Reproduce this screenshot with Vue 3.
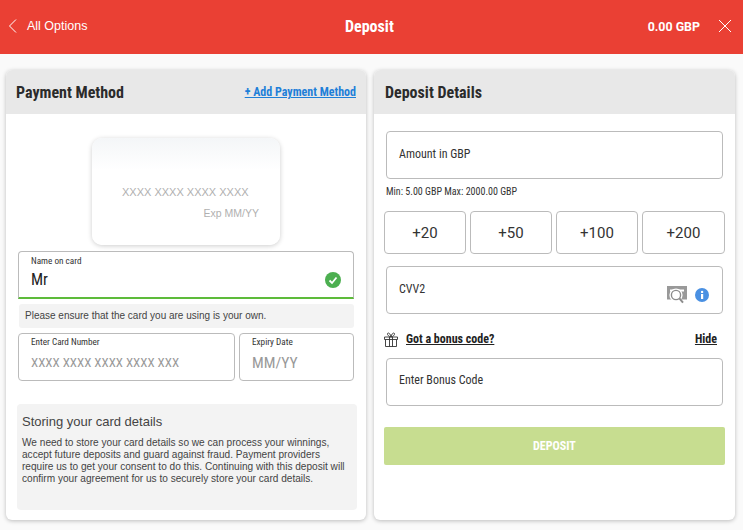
<template>
  <div class="page">
    <header class="topbar">
      <div class="back">
        <svg width="10" height="16" viewBox="0 0 10 16"><path d="M8 1.5 L1.5 8 L8 14.5" fill="none" stroke="#fff" stroke-width="1" /></svg>
        <span>All Options</span>
      </div>
      <div class="top-title">Deposit</div>
      <div class="top-right">
        <span class="balance">0.00 GBP</span>
        <svg width="14" height="14" viewBox="0 0 14 14"><path d="M1 1 L13 13 M13 1 L1 13" fill="none" stroke="#fff" stroke-width="1" /></svg>
      </div>
    </header>

    <main class="columns">
      <section class="panel left">
        <div class="panel-head">
          <h2>Payment Method</h2>
          <a class="add-link">+ Add Payment Method</a>
        </div>
        <div class="left-body">
          <div class="card-preview">
            <div class="card-number">XXXX XXXX XXXX XXXX</div>
            <div class="card-exp">Exp MM/YY</div>
          </div>

          <div class="field name-field">
            <label>Name on card</label>
            <div class="value">Mr</div>
            <svg class="ok" width="16" height="16" viewBox="0 0 16 16">
              <circle cx="8" cy="8" r="8" fill="#4caf50" />
              <path d="M4.5 8.5 L7 11 L11.5 5.5" fill="none" stroke="#fff" stroke-width="1.8" />
            </svg>
          </div>
          <div class="note">Please ensure that the card you are using is your own.</div>
          <div class="card-row">
            <div class="field number-field">
              <label>Enter Card Number</label>
              <div class="placeholder number-hint">XXXX XXXX XXXX XXXX XXX</div>
            </div>
            <div class="field expiry-field">
              <label>Expiry Date</label>
              <div class="placeholder">MM/YY</div>
            </div>
          </div>

          <div class="storing">
            <h3>Storing your card details</h3>
            <p>We need to store your card details so we can process your winnings, accept future deposits and guard against fraud. Payment providers require us to get your consent to do this. Continuing with this deposit will confirm your agreement for us to securely store your card details.</p>
          </div>
        </div>
      </section>

      <section class="panel right">
        <div class="panel-head">
          <h2>Deposit Details</h2>
        </div>
        <div class="right-body">
          <div class="box">Amount in GBP</div>
          <div class="limits">Min: 5.00 GBP Max: 2000.00 GBP</div>
          <div class="quick">
            <button v-for="amount in amounts" :key="amount">+{{ amount }}</button>
          </div>
          <div class="box cvv">
            CVV2
            <div class="cvv-icons">
              <svg width="20" height="18" viewBox="0 0 20 18">
                <rect x="0" y="0" width="20" height="13.5" fill="#999" />
                <rect x="3" y="3.5" width="14" height="2" fill="#fff" />
                <circle cx="9" cy="9" r="6.6" fill="#fff" />
                <circle cx="9" cy="9" r="4.6" fill="#fff" stroke="#8c8c8c" stroke-width="1.4" />
                <path d="M12.4 12.4 L16 16.6" stroke="#8c8c8c" stroke-width="2" />
              </svg>
              <svg width="14" height="14" viewBox="0 0 14 14">
                <circle cx="7" cy="7" r="7" fill="#4a90e2" />
                <rect x="6" y="6" width="2.2" height="5" fill="#fff" />
                <circle cx="7.1" cy="3.9" r="1.2" fill="#fff" />
              </svg>
            </div>
          </div>
          <div class="bonus-row">
            <svg width="14" height="15" viewBox="0 0 14 15">
              <path d="M.5 5 H13.5 V7.5 H.5 Z M1.5 7.5 V14.5 H12.5 V7.5 M5.5 5 V14.5 M8.5 5 V14.5 M7 5 C5 4.5 3 3 3.5 1.5 C4.2 .2 6.5 1.5 7 5 C7.5 1.5 9.8 .2 10.5 1.5 C11 3 9 4.5 7 5" fill="none" stroke="#333" stroke-width=".9" />
            </svg>
            <a class="bonus-link">Got a bonus code?</a>
            <a class="hide-link">Hide</a>
          </div>
          <div class="box bonus">Enter Bonus Code</div>
          <button class="deposit">DEPOSIT</button>
        </div>
      </section>
    </main>
  </div>
</template>

<script setup>
const amounts = [20, 50, 100, 200];
</script>

<style>
body {
  margin: 0;
  background: #fafafa;
}
</style>

<style scoped>
.page {
  width: 743px;
  height: 530px;
  overflow: hidden;
  background: #fafafa;
  font-family: Roboto, "Liberation Sans", sans-serif;
  color: #222;
}

/* top bar */
.topbar {
  height: 54px;
  background: #ea4034;
  color: #fff;
  display: flex;
  align-items: center;
  justify-content: space-between;
  padding: 0 11px 2px 8px;
  box-sizing: border-box;
  position: relative;
}

.back {
  display: flex;
  align-items: center;
  gap: 9px;
  font-family: "Liberation Sans", sans-serif;
  font-size: 12.5px;
}

.top-title {
  font-family: "Roboto Condensed", "Liberation Sans Narrow", Roboto, sans-serif;
  font-stretch: condensed;
  font-weight: 700;
  font-size: 16px;
  position: absolute;
  left: 345px;
}

.top-right {
  display: flex;
  align-items: center;
  gap: 18px;
}

.balance {
  font-size: 12.4px;
  font-weight: 700;
}

/* panels */
.columns {
  display: flex;
  gap: 8px;
  padding: 16px 8px 0 6px;
}

.panel {
  height: 450px;
  background: #fff;
  border-radius: 6px;
  box-shadow: 0 1px 4px rgba(0, 0, 0, 0.25);
  overflow: hidden;
}

.left {
  width: 360px;
}

.right {
  width: 361px;
}

.panel-head {
  height: 44px;
  background: #e8e8e8;
  display: flex;
  align-items: center;
  justify-content: space-between;
  padding: 0 10px;
}

.right .panel-head {
  padding-left: 11px;
}

.panel-head h2 {
  margin: 0;
  font-family: "Roboto Condensed", "Liberation Sans Narrow", Roboto, sans-serif;
  font-stretch: condensed;
  font-size: 16px;
  font-weight: 700;
  color: #2b2b2b;
}

.add-link {
  font-family: "Roboto Condensed", "Liberation Sans Narrow", Roboto, sans-serif;
  font-stretch: condensed;
  font-size: 12px;
  font-weight: 700;
  color: #1e7fd8;
  text-decoration: underline;
}

/* left column */
.left-body {
  padding: 24px 12px 0;
}

.card-preview {
  width: 188px;
  height: 107px;
  margin: 0 auto 6px;
  box-sizing: border-box;
  padding: 48px 21px 0 30px;
  border-radius: 10px;
  background: linear-gradient(#f4f6f8, #fff 30%, #fff);
  box-shadow: 0 1px 5px rgba(0, 0, 0, 0.2);
  font-family: "Liberation Sans", sans-serif;
  color: #b0b0b0;
}

.card-number {
  font-size: 11px;
  white-space: nowrap;
}

.card-exp {
  margin-top: 9px;
  font-size: 10.5px;
  text-align: right;
}

.field {
  box-sizing: border-box;
  position: relative;
  border: 1px solid #bbb;
  border-radius: 4px;
  padding: 2px 12px 0;
}

.field label {
  display: block;
  font-family: "Roboto Condensed", "Liberation Sans Narrow", Roboto, sans-serif;
  font-stretch: condensed;
  font-size: 9.2px;
  line-height: 14px;
  color: #333;
}

.name-field {
  width: 336px;
  height: 48px;
  border-bottom: 2px solid #5dbb3a;
  border-radius: 4px 4px 0 0;
}

.value {
  font-family: "Roboto Condensed", "Liberation Sans Narrow", Roboto, sans-serif;
  font-stretch: condensed;
  font-size: 16px;
  line-height: 22px;
  margin-top: 1px;
}

.ok {
  position: absolute;
  right: 12px;
  top: 20px;
}

.note {
  width: 335px;
  height: 24px;
  margin: 5px 0 5px 1px;
  padding-left: 6px;
  box-sizing: border-box;
  background: #f3f3f3;
  border-radius: 3px;
  font-family: "Liberation Sans", sans-serif;
  font-size: 10px;
  line-height: 24px;
  color: #444;
}

.card-row {
  display: flex;
  gap: 4px;
}

.number-field {
  width: 217px;
  height: 48px;
  padding-top: 1px;
}

.expiry-field {
  width: 115px;
  height: 48px;
  padding-top: 1px;
}

.placeholder {
  font-family: "Roboto Condensed", "Liberation Sans Narrow", Roboto, sans-serif;
  font-stretch: condensed;
  font-size: 15.5px;
  line-height: 20px;
  margin-top: 4px;
  color: #999;
  white-space: nowrap;
}

.number-hint {
  font-size: 13px;
}

.storing {
  width: 340px;
  height: 106px;
  margin: 23px 0 0 -1px;
  padding: 10px 6px 0 5px;
  box-sizing: border-box;
  background: #f3f3f3;
  border-radius: 4px;
  font-family: "Liberation Sans", sans-serif;
  color: #444;
}

.storing h3 {
  margin: 0;
  font-size: 13px;
  font-weight: 400;
  line-height: 16px;
}

.storing p {
  margin: 7px 0 0;
  font-size: 10.1px;
  line-height: 12px;
}

/* right column */
.right-body {
  padding: 17px 10px 0;
}

.box {
  box-sizing: border-box;
  width: 337px;
  height: 48px;
  margin-left: 2px;
  border: 1px solid #bbb;
  border-radius: 4px;
  padding: 14px 12px 0;
  font-family: "Roboto Condensed", "Liberation Sans Narrow", Roboto, sans-serif;
  font-stretch: condensed;
  font-size: 12px;
  line-height: 16px;
  color: #333;
  position: relative;
}

.limits {
  margin: 7px 0 0 2px;
  font-family: "Roboto Condensed", "Liberation Sans Narrow", Roboto, sans-serif;
  font-stretch: condensed;
  font-size: 10px;
  line-height: 12px;
  color: #333;
}

.quick {
  display: grid;
  grid-template-columns: 82px 82px 82px 83px;
  gap: 4px;
  margin-top: 13px;
}

.quick button {
  height: 43px;
  padding: 0;
  background: #fff;
  border: 1px solid #bbb;
  border-radius: 4px;
  font-family: Roboto, sans-serif;
  font-size: 15px;
  color: #333;
}

.cvv {
  margin-top: 12px;
}

.cvv-icons {
  position: absolute;
  right: 13px;
  top: 19px;
  display: flex;
  align-items: center;
  gap: 8px;
}

.bonus-row {
  display: flex;
  align-items: center;
  height: 20px;
  margin-top: 15px;
  font-family: "Roboto Condensed", "Liberation Sans Narrow", Roboto, sans-serif;
  font-stretch: condensed;
  font-size: 12px;
  font-weight: 700;
  color: #222;
}

.bonus-link {
  margin-left: 8px;
  text-decoration: underline;
}

.hide-link {
  margin-left: auto;
  margin-right: 8px;
  text-decoration: underline;
}

.bonus {
  margin-top: 9px;
  padding-top: 13px;
}

.deposit {
  display: block;
  width: 341px;
  height: 38px;
  margin-top: 21px;
  padding: 0;
  background: #c7dd90;
  border: none;
  border-radius: 2px;
  color: #fff;
  font-family: "Roboto Condensed", "Liberation Sans Narrow", Roboto, sans-serif;
  font-stretch: condensed;
  font-size: 12px;
  font-weight: 700;
}
</style>
